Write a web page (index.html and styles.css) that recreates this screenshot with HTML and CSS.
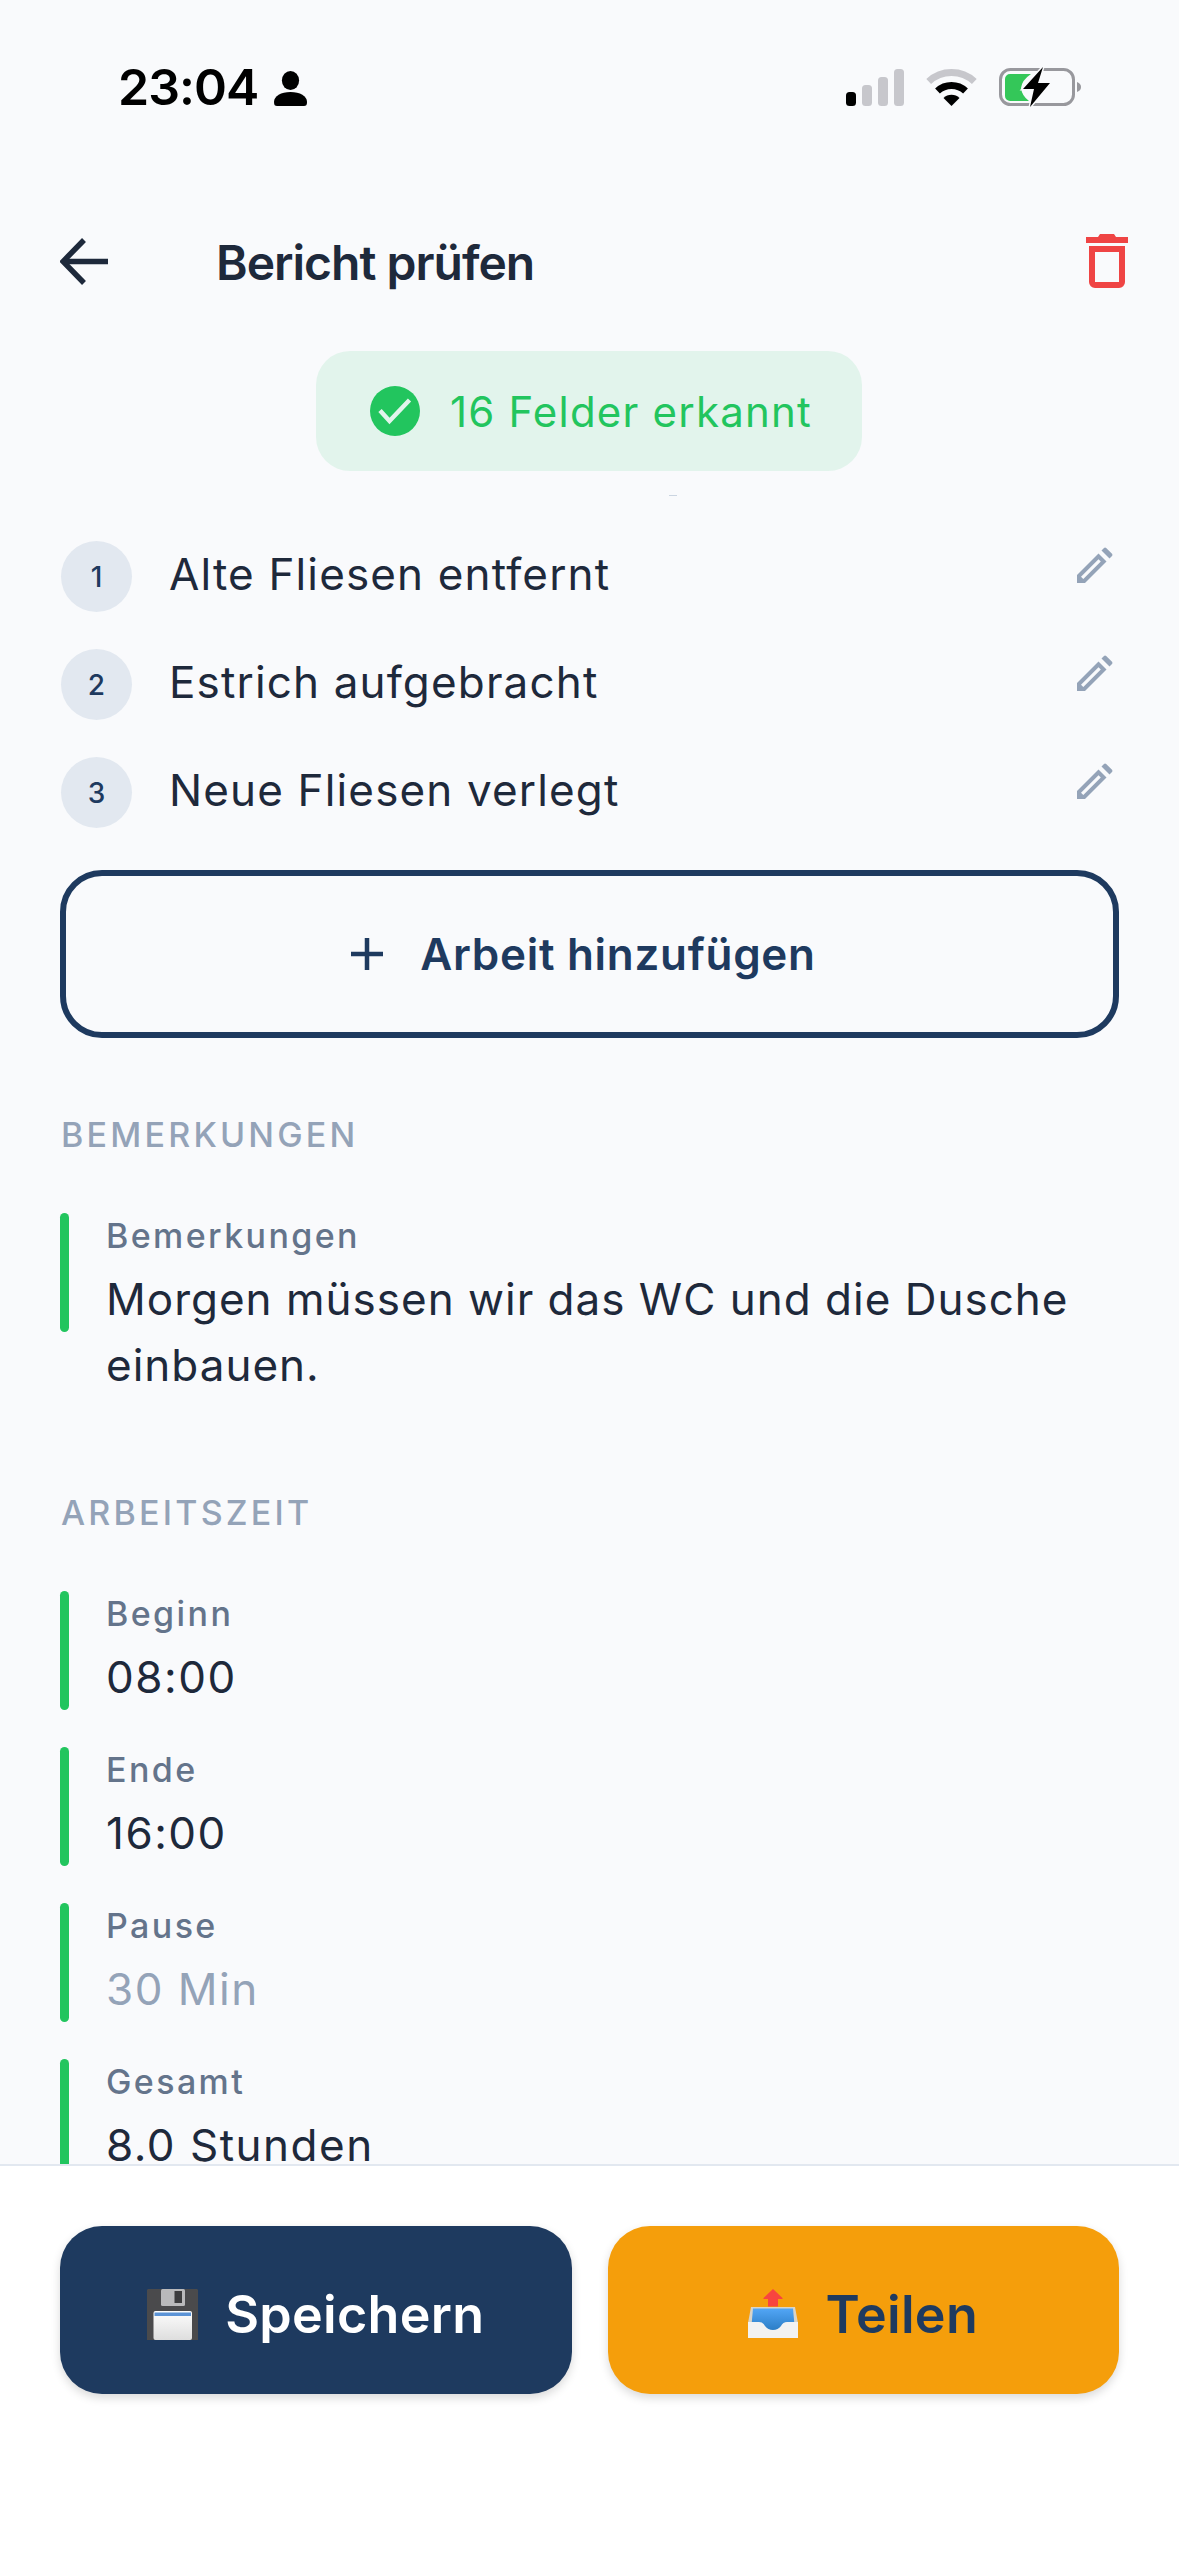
FILE: index.html
```html
<!DOCTYPE html>
<html lang="de">
<head>
    <meta charset="UTF-8">
    <meta name="viewport" content="width=device-width, initial-scale=1.0">
    <title>Bericht prüfen</title>
    <link rel="stylesheet" href="styles.css">
</head>
<body>
<div class="app">

    <div class="status-bar">
        <div class="status-left">
            <span class="time">23:04</span>
            <svg class="person" width="33" height="35" viewBox="0 0 33 35"><ellipse cx="16.5" cy="9.5" rx="8.6" ry="9.5"/><path d="M0 31C0 25 7 21 16.5 21S33 25 33 31C33 34 32 35 30 35H3C1 35 0 34 0 31Z"/></svg>
        </div>
        <div class="status-right">
            <svg width="58" height="37" viewBox="0 0 58 37">
                <rect x="0" y="23" width="10" height="14" rx="3.5" fill="#000"/>
                <rect x="16" y="16" width="10" height="21" rx="3.5" fill="#c7c7cc"/>
                <rect x="32" y="8" width="10" height="29" rx="3.5" fill="#c7c7cc"/>
                <rect x="48" y="0" width="10" height="37" rx="3.5" fill="#c7c7cc"/>
            </svg>
            <svg width="51" height="37" viewBox="0 0 51 37" fill="none">
                <path d="M2.7 12.5A33.5 33.5 0 0 1 48.3 12.5" stroke="#c7c7cc" stroke-width="7"/>
                <path d="M11.5 22A20.5 20.5 0 0 1 39.5 22" stroke="#000" stroke-width="7"/>
                <path d="M25.5 37L17.5 29A11.3 11.3 0 0 1 33.5 29Z" fill="#000"/>
            </svg>
            <svg class="battery" width="84" height="42" viewBox="0 0 84 42">
                <rect x="2.5" y="3.5" width="73" height="35" rx="10" fill="none" stroke="#98989d" stroke-width="3"/>
                <path d="M79 16C82 17 83 19 83 21S82 25 79 26Z" fill="#98989d"/>
                <path d="M12 8H33Q24 14 23 22Q24 30 31 35H12A5 5 0 0 1 7 30V13A5 5 0 0 1 12 8Z" fill="#34c759"/>
                <path d="M45 1L25 23H36L32 41L52 17H40Z" fill="#000" stroke="#f9fafc" stroke-width="3" paint-order="stroke"/>
            </svg>
        </div>
    </div>

    <header class="top-bar">
        <svg class="back-icon" width="48" height="47" viewBox="0 0 48 47" fill="none" stroke="#1e293b" stroke-width="5.5"><path d="M24 2L3 23.5L24 45"/><path d="M3 23.5H48"/></svg>
        <h1>Bericht prüfen</h1>
        <svg class="trash-icon" width="42" height="54" viewBox="0 0 42 54" fill="#ef4444">
            <path d="M12 3L14 0H28L30 3H42V9H0V3Z"/>
            <path fill-rule="evenodd" d="M3 12H39V48A6 6 0 0 1 33 54H9A6 6 0 0 1 3 48ZM9 18V48H33V18Z"/>
        </svg>
    </header>

    <main class="content">
        <div class="chip-wrap">
            <div class="chip">
                <svg width="50" height="50" viewBox="0 0 50 50" fill="none"><circle cx="25" cy="25" r="25" fill="#22c55e"/><path d="M10 24.5L19.5 35L39.5 14" stroke="#e2f4ec" stroke-width="4.5"/></svg>
                <span>16 Felder erkannt</span>
            </div>
            <div class="speck"></div>
        </div>

        <div class="work-list">
            <div class="work-row">
                <span class="num">1</span>
                <span class="work-name">Alte Fliesen entfernt</span>
                <svg class="pencil" width="36" height="36" viewBox="0 0 36 36"><path fill-rule="evenodd" d="M0 36V28L21.5 6.5L29.5 14.5L8 36ZM4 29.7L21.5 12.2L23.8 14.5L6.3 32Z"/><path d="M24.5 3.5L27 1Q28 0 29.2 1L35 6.8Q36 8 35 9L32.5 11.5Z"/></svg>
            </div>
            <div class="work-row">
                <span class="num">2</span>
                <span class="work-name">Estrich aufgebracht</span>
                <svg class="pencil" width="36" height="36" viewBox="0 0 36 36"><path fill-rule="evenodd" d="M0 36V28L21.5 6.5L29.5 14.5L8 36ZM4 29.7L21.5 12.2L23.8 14.5L6.3 32Z"/><path d="M24.5 3.5L27 1Q28 0 29.2 1L35 6.8Q36 8 35 9L32.5 11.5Z"/></svg>
            </div>
            <div class="work-row">
                <span class="num">3</span>
                <span class="work-name">Neue Fliesen verlegt</span>
                <svg class="pencil" width="36" height="36" viewBox="0 0 36 36"><path fill-rule="evenodd" d="M0 36V28L21.5 6.5L29.5 14.5L8 36ZM4 29.7L21.5 12.2L23.8 14.5L6.3 32Z"/><path d="M24.5 3.5L27 1Q28 0 29.2 1L35 6.8Q36 8 35 9L32.5 11.5Z"/></svg>
            </div>
        </div>

        <button class="add-btn">
            <svg width="32" height="32" viewBox="0 0 32 32" stroke="#1e3a5f" stroke-width="4.5"><path d="M16 0V32M0 16H32"/></svg>
            <span>Arbeit hinzufügen</span>
        </button>

        <section class="section section-notes">
            <h2>BEMERKUNGEN</h2>
            <div class="field">
                <div class="field-bar"></div>
                <div class="field-text">
                    <div class="field-label">Bemerkungen</div>
                    <div class="field-value">Morgen müssen wir das WC und die Dusche einbauen.</div>
                </div>
            </div>
        </section>

        <section class="section section-time">
            <h2>ARBEITSZEIT</h2>
            <div class="field">
                <div class="field-bar"></div>
                <div class="field-text">
                    <div class="field-label">Beginn</div>
                    <div class="field-value">08:00</div>
                </div>
            </div>
            <div class="field">
                <div class="field-bar"></div>
                <div class="field-text">
                    <div class="field-label">Ende</div>
                    <div class="field-value">16:00</div>
                </div>
            </div>
            <div class="field">
                <div class="field-bar"></div>
                <div class="field-text">
                    <div class="field-label">Pause</div>
                    <div class="field-value muted">30 Min</div>
                </div>
            </div>
            <div class="field">
                <div class="field-bar"></div>
                <div class="field-text">
                    <div class="field-label">Gesamt</div>
                    <div class="field-value">8.0 Stunden</div>
                </div>
            </div>
        </section>
    </main>

    <footer class="bottom-bar">
        <button class="action-btn save-btn">
            <svg width="51" height="51" viewBox="0 0 51 51">
                <defs>
                    <linearGradient id="label-fill" x1="0" y1="0" x2="0" y2="1">
                        <stop offset="0" stop-color="#fdfdfd"/>
                        <stop offset="1" stop-color="#dedede"/>
                    </linearGradient>
                </defs>
                <path d="M1 0H50L51 1V51H0V1Z" fill="#4a4a4c"/>
                <rect x="14" y="0" width="24" height="17" rx="1.5" fill="#b9b9bb"/>
                <rect x="27.5" y="2" width="7.5" height="12" fill="#3c3c3e"/>
                <rect x="6.5" y="22" width="38.5" height="29" rx="2" fill="url(#label-fill)"/>
                <rect x="7.5" y="23.5" width="36.5" height="3.5" fill="#5b93d6"/>
            </svg>
            <span>Speichern</span>
        </button>
        <button class="action-btn share-btn">
            <svg width="50" height="50" viewBox="0 0 50 50">
                <defs>
                    <linearGradient id="tray-fill" x1="0" y1="0" x2="0" y2="1">
                        <stop offset="0" stop-color="#52a6f6"/>
                        <stop offset="1" stop-color="#2a7cc4"/>
                    </linearGradient>
                </defs>
                <path d="M25 0L34.5 9V10H30V17.5H20V10H15.5V9Z" fill="#f8453f"/>
                <path d="M3 18H47L50 34H0Z" fill="#d9d4c8"/>
                <path d="M5 19.5H45L47 42H3Z" fill="url(#tray-fill)"/>
                <path d="M0 33H11Q15 33 17 37Q20 41 25 41T33 37Q35 33 39 33H50V49H0Z" fill="#f2f2f2"/>
            </svg>
            <span>Teilen</span>
        </button>
    </footer>

</div>
</body>
</html>
```

FILE: styles.css
```css
/* General Styles */
html, body {
    margin: 0;
    padding: 0;
}

body {
    width: 1179px;
    height: 2556px;
    overflow: hidden;
    font-family: Inter, "Noto Sans", sans-serif;
    background-color: #f9fafc;
    color: #1e293b;
}

.app {
    display: flex;
    flex-direction: column;
    height: 2556px;
}

/* Status bar */
.status-bar {
    display: flex;
    justify-content: space-between;
    align-items: flex-start;
    height: 202px;
    box-sizing: border-box;
    padding: 60px 97px 0 118px;
    flex-shrink: 0;
}

.status-left {
    display: flex;
    align-items: center;
    gap: 16px;
    height: 55px;
}

.time {
    font-size: 50px;
    font-weight: 600;
    line-height: 55px;
    letter-spacing: -1px;
    color: #000;
}

.person {
    margin-top: 2px;
}

.status-right {
    display: flex;
    align-items: center;
    gap: 22px;
    margin-top: 6px;
}

.battery {
    margin-left: -1px;
}

/* Header */
.top-bar {
    display: flex;
    align-items: center;
    height: 118px;
    padding: 0 51px 0 60px;
    flex-shrink: 0;
}

.back-icon {
    flex-shrink: 0;
}

.top-bar h1 {
    flex: 1;
    margin: 3px 0 0 108px;
    font-size: 48px;
    font-weight: 600;
    letter-spacing: -1px;
    color: #1e293b;
}

/* Scroll area */
.content {
    flex: 1;
    overflow: hidden;
    min-height: 0;
}

.chip-wrap {
    margin-top: 31px;
    height: 190px;
}

.chip {
    display: flex;
    align-items: center;
    gap: 30px;
    width: 546px;
    height: 120px;
    box-sizing: border-box;
    margin-left: 316px;
    padding-left: 54px;
    border-radius: 34px;
    background-color: #e2f4ec;
    color: #22c55e;
    font-size: 42px;
    font-weight: 400;
    letter-spacing: 1.2px;
}

.speck {
    width: 8px;
    height: 1px;
    margin: 24px 0 0 669px;
    background-color: #cbd5e1;
}

.work-list {
    display: flex;
    flex-direction: column;
    gap: 37px;
    padding: 0 66px 0 61px;
}

.work-row {
    display: flex;
    align-items: center;
    height: 71px;
}

.num {
    display: flex;
    align-items: center;
    justify-content: center;
    width: 71px;
    height: 71px;
    border-radius: 50%;
    background-color: #e2e8f0;
    color: #1e3a5f;
    font-size: 28px;
    font-weight: 500;
    flex-shrink: 0;
}

.work-name {
    flex: 1;
    margin: 0 0 6px 37px;
    font-size: 44px;
    letter-spacing: 1.15px;
}

.pencil {
    fill: #94a3b8;
    margin-bottom: 24px;
}

.add-btn {
    display: flex;
    align-items: center;
    justify-content: center;
    gap: 37px;
    width: 1059px;
    height: 168px;
    box-sizing: border-box;
    margin: 42px 0 0 60px;
    padding: 0 12px 0 0;
    border: 6px solid #1e3a5f;
    border-radius: 42px;
    background: transparent;
    color: #1e3a5f;
    font-family: inherit;
    font-size: 44px;
    font-weight: 600;
    letter-spacing: 0.7px;
}

/* Sections */
.section {
    padding: 0 60px;
}

.section-notes {
    margin-top: 76px;
}

.section-time {
    margin-top: 94px;
}

.section h2 {
    margin: 0 0 57px 1px;
    font-size: 34px;
    line-height: 42px;
    font-weight: 500;
    letter-spacing: 3.2px;
    color: #94a3b8;
}

.field {
    display: flex;
    gap: 37px;
    margin-bottom: 37px;
}

.field-bar {
    width: 9px;
    height: 119px;
    border-radius: 5px;
    background-color: #22c55e;
    flex-shrink: 0;
}

.field-label {
    margin-bottom: 7px;
    font-size: 34px;
    line-height: 46px;
    font-weight: 500;
    letter-spacing: 2.4px;
    color: #64748b;
}

.field-value {
    font-size: 44px;
    line-height: 66px;
    letter-spacing: 1px;
    color: #1e293b;
}

.section-time .field-value {
    letter-spacing: 1.5px;
}

.field-value.muted {
    color: #94a3b8;
}

/* Bottom buttons */
.bottom-bar {
    display: flex;
    gap: 36px;
    height: 392px;
    box-sizing: border-box;
    padding: 60px 60px 0;
    border-top: 2px solid #e2e8f0;
    background-color: #fff;
    flex-shrink: 0;
}

.action-btn {
    display: flex;
    align-items: center;
    justify-content: center;
    gap: 27px;
    flex: 1;
    height: 168px;
    padding: 8px 0 0;
    border: none;
    border-radius: 42px;
    font-family: inherit;
    font-size: 52px;
    font-weight: 600;
    letter-spacing: 0.3px;
    box-shadow: 0 4px 10px rgba(0, 0, 0, 0.15);
}

.save-btn {
    background-color: #1e3a5f;
    color: #fff;
}

.share-btn {
    background-color: #f59e0b;
    color: #1e3a5f;
}
```
